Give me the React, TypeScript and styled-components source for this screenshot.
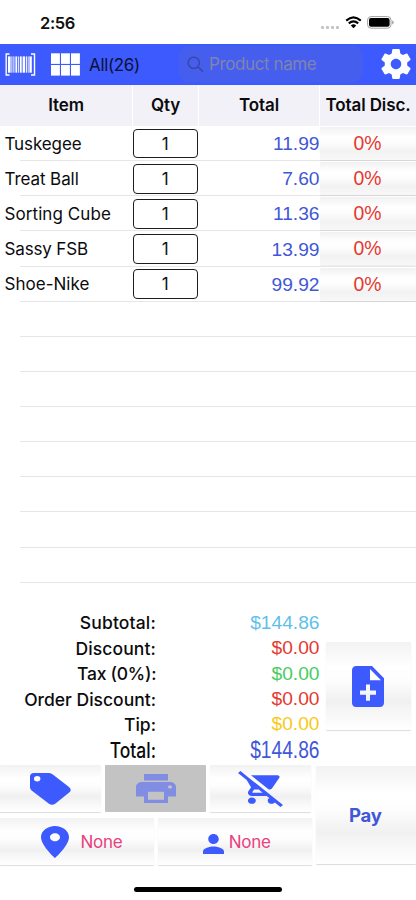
import React from "react";
import styled, { createGlobalStyle } from "styled-components";

const BLUE = "#3d5afe";
const INK_BLUE = "#4157d8";
const RED = "#e5392f";

const GlobalStyle = createGlobalStyle`
  *, *::before, *::after { box-sizing: border-box; }
  body { margin: 0; background: #fff; }
  button, input { font: inherit; border: 0; padding: 0; margin: 0; }
`;

const Screen = styled.main`
  width: 416px;
  height: 900px;
  display: flex;
  flex-direction: column;
  overflow: hidden;
  background: #fff;
  color: #0b0b0d;
  font-family: Inter, "Liberation Sans", sans-serif;
  font-size: 17px;
`;

const StatusBar = styled.header`
  flex: none;
  height: 44px;
  padding: 1px 22px 0 40px;
  display: flex;
  align-items: center;
  justify-content: space-between;
`;

const Clock = styled.time`
  font-size: 16.5px;
  font-weight: 600;
  letter-spacing: -0.4px;
  color: #111;
`;

const StatusIcons = styled.div`
  display: flex;
  align-items: center;
  gap: 5.5px;
`;

const Signal = styled.span`
  display: flex;
  gap: 2px;
  padding-top: 9px;
`;

const SignalDot = styled.i`
  width: 3px;
  height: 3px;
  border-radius: 1px;
  background: #c4c4c4;
`;

const NavBar = styled.nav`
  flex: none;
  height: 40.5px;
  padding: 0 5px;
  display: flex;
  align-items: center;
  background: ${BLUE};
`;

const Category = styled.span`
  width: 99px;
  padding: 1px 0 0 9px;
  font-size: 17px;
  letter-spacing: -0.35px;
  white-space: nowrap;
  color: #0b1136;
`;

const SearchField = styled.label`
  width: 184px;
  height: 36px;
  margin-right: 18px;
  padding-left: 8px;
  display: flex;
  align-items: center;
  gap: 5px;
  border-radius: 10px;
  background: #465eee;
`;

const SearchInput = styled.input`
  width: 140px;
  background: transparent;
  outline: none;
  letter-spacing: -0.4px;
  &::placeholder { color: #7f84ae; opacity: 1; }
`;

const HeaderRow = styled.div`
  flex: none;
  height: 41px;
  display: grid;
  grid-template-columns: 132px 66px 121px 97px;
  background: #f2f1f8;
`;

const HeaderCell = styled.div`
  display: flex;
  align-items: center;
  justify-content: center;
  border-left: 1px solid #fff;
  font-size: 17px;
  font-weight: 600;
  letter-spacing: -0.1px;
  white-space: nowrap;
  &:first-child { border-left: 0; }
`;

const Rows = styled.div`
  flex: none;
  height: 484.5px;
  padding-top: 0.6px;
`;

const Row = styled.div`
  height: 35.13px;
  display: grid;
  grid-template-columns: 132px 66px 121.5px 1fr;
  align-items: center;
  background: linear-gradient(#e6e6e8, #e6e6e8) 20px 100% / 100% 1px no-repeat;
`;

const ItemName = styled.span<{ $spacing: number }>`
  padding-left: 4.5px;
  letter-spacing: ${(p) => p.$spacing}px;
  white-space: nowrap;
`;

const Quantity = styled.input`
  width: 65px;
  height: 29.5px;
  margin-left: 0.8px;
  border: 1.4px solid #1d1d1f;
  border-radius: 4px;
  background: #fff;
  text-align: center;
  color: #111;
`;

const Amount = styled.span`
  padding-top: 1px;
  text-align: right;
  font-family: "Liberation Sans", Arial, sans-serif;
  font-size: 19.2px;
  color: ${INK_BLUE};
`;

const SoftButton = styled.button`
  display: flex;
  align-items: center;
  justify-content: center;
  border-radius: 1px;
  background: linear-gradient(#f2f2f2 0%, #fff 28%, #fdfdfd 45%, #f0f0f0 68%, #f5f5f5 76%, #fff 100%);
  box-shadow: 0 1px 1px rgba(0, 0, 0, 0.14);
`;

const RowDiscount = styled(SoftButton)`
  width: 96px;
  height: 33px;
  align-self: start;
  margin-top: 1px;
  background: linear-gradient(#f1f1f1 0%, #fff 30%, #fdfdfd 48%, #f2f2f2 74%, #f8f8f8 100%);
  box-shadow: 0 1px 1px rgba(0, 0, 0, 0.07);
  font-family: "Liberation Sans", Arial, sans-serif;
  font-size: 19.4px;
  color: ${RED};
`;

const Summary = styled.section`
  flex: none;
  height: 155px;
  display: grid;
  grid-template-columns: 319.5px 85px;
  column-gap: 6px;
`;

const SummaryLines = styled.dl`
  margin: 0;
`;

const SummaryLine = styled.div`
  height: 25.45px;
  display: grid;
  grid-template-columns: 156px 1fr;
  align-items: center;
  white-space: nowrap;
`;

const Label = styled.dt<{ $spacing: number; $tall?: boolean }>`
  text-align: right;
  font-size: 17.5px;
  font-weight: 450;
  margin-right: ${(p) => p.$spacing}px;
  letter-spacing: ${(p) => p.$spacing}px;
  transform-origin: right center;
  transform: ${(p) => (p.$tall ? "translateY(1px) scaleY(1.22)" : "none")};
`;

const Value = styled.dd<{ $color: string; $tall?: boolean }>`
  margin: 0;
  text-align: right;
  font-family: "Liberation Sans", Arial, sans-serif;
  font-size: 19.2px;
  color: ${(p) => p.$color};
  transform: ${(p) => (p.$tall ? "translateY(1px) scaleY(1.22)" : "none")};
`;

const NoteButton = styled(SoftButton)`
  height: 88px;
  margin-top: 32px;
`;

const Actions = styled.footer`
  flex: none;
  height: 100px;
  display: grid;
  grid-template-columns: 311.5px 100.5px;
  column-gap: 4px;
`;

const ActionGroup = styled.div`
  display: flex;
  flex-direction: column;
  gap: 6px;
`;

const ActionRow = styled.div<{ $columns: number }>`
  height: 47px;
  display: grid;
  grid-template-columns: repeat(${(p) => p.$columns}, 1fr);
  column-gap: 4px;
`;

const DisabledButton = styled(SoftButton)`
  background: #c3c3c4;
  box-shadow: none;
`;

const PickButton = styled(SoftButton)<{ $gap: number; $shift: number }>`
  gap: ${(p) => p.$gap}px;
  padding-left: ${(p) => p.$shift}px;
  letter-spacing: -0.3px;
  color: #e8407f;
`;

const PersonSlot = styled.span`
  padding-top: 4px;
`;

const PayButton = styled(SoftButton)`
  height: 98px;
  margin-top: 1px;
  padding-right: 1px;
  font-size: 18.5px;
  font-weight: 650;
  letter-spacing: -0.2px;
  color: ${INK_BLUE};
`;

const HomeArea = styled.div`
  flex: none;
  height: 35px;
  display: flex;
  justify-content: center;
  padding-top: 22px;
`;

const HomeIndicator = styled.div`
  width: 148px;
  height: 5px;
  border-radius: 3px;
  background: #000;
`;

const Icon = styled.svg<{ $gap?: number }>`
  display: block;
  flex: none;
  margin-right: ${(p) => p.$gap ?? 0}px;
`;

interface GlyphProps {
  d: string;
  box: string;
  width: number;
  height: number;
  color?: string;
}

const Glyph = ({ d, box, width, height, color = BLUE }: GlyphProps) => (
  <Icon width={width} height={height} viewBox={box} preserveAspectRatio="none" fill={color} aria-hidden>
    <path d={d} />
  </Icon>
);

const PATHS = {
  gear: "M19.43 12.98c.04-.32.07-.64.07-.98s-.03-.66-.07-.98l2.11-1.65c.19-.15.24-.42.12-.64l-2-3.46c-.12-.22-.39-.3-.61-.22l-2.49 1c-.52-.4-1.08-.73-1.69-.98l-.38-2.65C14.46 2.18 14.25 2 14 2h-4c-.25 0-.46.18-.49.42l-.38 2.65c-.61.25-1.17.59-1.69.98l-2.49-1c-.23-.09-.49 0-.61.22l-2 3.46c-.13.22-.07.49.12.64l2.11 1.65c-.04.32-.07.65-.07.98s.03.66.07.98l-2.11 1.65c-.19.15-.24.42-.12.64l2 3.46c.12.22.39.3.61.22l2.49-1c.52.4 1.08.73 1.69.98l.38 2.65c.03.24.24.42.49.42h4c.25 0 .46-.18.49-.42l.38-2.65c.61-.25 1.17-.59 1.69-.98l2.49 1c.23.09.49 0 .61-.22l2-3.46c.12-.22.07-.49-.12-.64l-2.11-1.65zM12 15.5c-1.93 0-3.5-1.57-3.5-3.5s1.57-3.5 3.5-3.5 3.5 1.57 3.5 3.5-1.57 3.5-3.5 3.5z",
  note: "M14 2H6c-1.1 0-1.99.9-1.99 2L4 20c0 1.1.89 2 1.99 2H18c1.1 0 2-.9 2-2V8l-6-6zm2 14h-3v3h-2v-3H8v-2h3v-3h2v3h3v2zm-3-7V3.5L18.5 9H13z",
  print: "M19 8H5c-1.66 0-3 1.34-3 3v6h4v4h12v-4h4v-6c0-1.66-1.34-3-3-3zm-3 11H8v-5h8v5zm3-7c-.55 0-1-.45-1-1s.45-1 1-1 1 .45 1 1-.45 1-1 1zm-1-9H6v4h12V3z",
  cart: "M22.73 22.73L2.77 2.77 2 2l-.73-.73L0 2.54l4.39 4.39 2.21 4.66-1.35 2.45c-.16.28-.25.61-.25.96 0 1.1.9 2 2 2h7.46l1.38 1.38c-.5.36-.83.95-.83 1.62 0 1.1.89 2 1.99 2 .67 0 1.26-.33 1.62-.84L21.46 24l1.27-1.27zM7.42 15c-.14 0-.25-.11-.25-.25l.03-.12.9-1.63h2.36l2 2H7.42zm8.13-2c.75 0 1.41-.41 1.75-1.03l3.58-6.49c.08-.14.12-.31.12-.48 0-.55-.45-1-1-1H6.54l9.01 9zM7 18c-1.1 0-1.99.9-1.99 2S5.9 22 7 22s2-.9 2-2-.9-2-2-2z",
  place: "M12 2C8.13 2 5 5.13 5 9c0 5.25 7 13 7 13s7-7.75 7-13c0-3.87-3.13-7-7-7zm0 9.5c-1.38 0-2.5-1.12-2.5-2.5s1.12-2.5 2.5-2.5 2.5 1.12 2.5 2.5-1.12 2.5-2.5 2.5z",
  person: "M12 12c2.21 0 4-1.79 4-4s-1.79-4-4-4-4 1.79-4 4 1.79 4 4 4zm0 2c-2.67 0-8 1.34-8 4v2h16v-2c0-2.66-5.33-4-8-4z",
  tag: "M4 0H18.5Q20.5 0 22.5 1.3L39 14Q42 16.7 39.8 19L25.5 30.5Q22 33 19 30.8L1.6 17.5Q0 16.2 0 14.5V3.5Q0 0 4 0ZM7.2 3.1A3.2 2.7 0 1 0 7.2 8.5A3.2 2.7 0 1 0 7.2 3.1Z",
};

const BARS: [number, number][] = [
  [3, 2.6], [6.4, 1], [8.4, 1], [10.4, 1.8], [13.2, 0.8], [14.8, 1.9],
  [17.6, 2.6], [21, 0.9], [22.7, 0.9], [24.4, 2.4],
];

const BarcodeIcon = () => (
  <Icon width={31} height={23} viewBox="0 0 31 23" $gap={15} aria-label="Scan">
    <path d="M4.5 1H1.2V22H4.5M26 1H29.5V22H26" fill="none" stroke="#fff" strokeWidth="1.4" />
    {BARS.map(([x, w]) => (
      <rect key={x} x={x} y="3.4" width={w} height="16.3" fill="#fff" />
    ))}
  </Icon>
);

const GridIcon = () => (
  <Icon width={29} height={23} viewBox="0 0 29 23" fill="#fff" aria-label="Categories">
    {[0, 10, 20].map((x) =>
      [0.3, 12].map((y) => <rect key={`${x}-${y}`} x={x} y={y} width="8.9" height="10.6" />)
    )}
  </Icon>
);

const WifiIcon = () => (
  <Icon width={17} height={13} viewBox="0 0 17 13" fill="none" stroke="#000" strokeWidth="2.1" aria-label="Wi-Fi">
    <path d="M1.2 4.6Q8.5 -2 15.8 4.6M3.8 7.4Q8.5 3.2 13.2 7.4" />
    <path d="M5.8 9.4Q8.5 7.1 11.2 9.4L8.5 12.2Z" fill="#000" stroke="none" />
  </Icon>
);

const BatteryIcon = () => (
  <Icon width={27} height={13} viewBox="0 0 27 13" aria-label="Battery">
    <rect x="0.6" y="0.6" width="23.4" height="11.6" rx="3.4" fill="none" stroke="#a2a2a2" strokeWidth="1" />
    <rect x="2" y="2" width="20.6" height="8.8" rx="2" fill="#000" />
    <path d="M25.1 4.2Q26.7 5 26.7 6.4T25.1 8.6Z" fill="#a2a2a2" />
  </Icon>
);

const SearchIcon = () => (
  <Icon width={17} height={17} viewBox="0 0 17 17" fill="none" stroke="#3a47a4" strokeWidth="1.5" strokeLinecap="round" aria-hidden>
    <circle cx="6.8" cy="6.8" r="5.6" />
    <path d="M11 11L15.6 15.4" />
  </Icon>
);

const ITEMS = [
  { name: "Tuskegee", total: "11.99", spacing: -0.1 },
  { name: "Treat Ball", total: "7.60", spacing: -0.08 },
  { name: "Sorting Cube", total: "11.36", spacing: 0.08 },
  { name: "Sassy FSB", total: "13.99", spacing: -0.15 },
  { name: "Shoe-Nike", total: "99.92", spacing: 0.02 },
];

const TOTALS = [
  { label: "Subtotal:", value: "$144.86", color: "#5fbfeb", spacing: 0.15 },
  { label: "Discount:", value: "$0.00", color: RED, spacing: 0.1 },
  { label: "Tax (0%):", value: "$0.00", color: "#48cc60", spacing: -0.25 },
  { label: "Order Discount:", value: "$0.00", color: RED, spacing: 0 },
  { label: "Tip:", value: "$0.00", color: "#f8c917", spacing: 0 },
  { label: "Total:", value: "$144.86", color: INK_BLUE, spacing: 0, tall: true },
];

export default function App() {
  return (
    <>
      <GlobalStyle />
      <Screen>
        <StatusBar>
          <Clock>2:56</Clock>
          <StatusIcons>
            <Signal>{[0, 1, 2, 3].map((n) => <SignalDot key={n} />)}</Signal>
            <WifiIcon />
            <BatteryIcon />
          </StatusIcons>
        </StatusBar>
        <NavBar>
          <BarcodeIcon />
          <GridIcon />
          <Category>All(26)</Category>
          <SearchField>
            <SearchIcon />
            <SearchInput placeholder="Product name" />
          </SearchField>
          <Glyph d={PATHS.gear} box="2 2 20 20" width={30} height={30} color="#fff" />
        </NavBar>
        <HeaderRow>
          <HeaderCell>Item</HeaderCell>
          <HeaderCell>Qty</HeaderCell>
          <HeaderCell>Total</HeaderCell>
          <HeaderCell>Total Disc.</HeaderCell>
        </HeaderRow>
        <Rows>
          {ITEMS.map((item) => (
            <Row key={item.name}>
              <ItemName $spacing={item.spacing}>{item.name}</ItemName>
              <Quantity defaultValue="1" />
              <Amount>{item.total}</Amount>
              <RowDiscount>0%</RowDiscount>
            </Row>
          ))}
          {Array.from({ length: 8 }, (_, i) => <Row key={i} />)}
        </Rows>
        <Summary>
          <SummaryLines>
            {TOTALS.map((t) => (
              <SummaryLine key={t.label}>
                <Label $spacing={t.spacing} $tall={t.tall}>{t.label}</Label>
                <Value $color={t.color} $tall={t.tall}>{t.value}</Value>
              </SummaryLine>
            ))}
          </SummaryLines>
          <NoteButton aria-label="Add note">
            <Glyph d={PATHS.note} box="4 2 16 20" width={32} height={41} />
          </NoteButton>
        </Summary>
        <Actions>
          <ActionGroup>
            <ActionRow $columns={3}>
              <SoftButton aria-label="Discounts">
                <Glyph d={PATHS.tag} box="0 0 41 32" width={41} height={32} />
              </SoftButton>
              <DisabledButton aria-label="Print" disabled>
                <Glyph d={PATHS.print} box="2 3 20 18" width={40} height={29} color="#808de2" />
              </DisabledButton>
              <SoftButton aria-label="Clear cart">
                <Glyph d={PATHS.cart} box="0 1.27 22.73 22.73" width={45} height={36} />
              </SoftButton>
            </ActionRow>
            <ActionRow $columns={2}>
              <PickButton $gap={11} $shift={10}>
                <Glyph d={PATHS.place} box="5 2 14 20" width={28} height={32} />
                None
              </PickButton>
              <PickButton $gap={5} $shift={4}>
                <PersonSlot>
                  <Glyph d={PATHS.person} box="4 4 16 16" width={21} height={20} />
                </PersonSlot>
                None
              </PickButton>
            </ActionRow>
          </ActionGroup>
          <PayButton>Pay</PayButton>
        </Actions>
        <HomeArea>
          <HomeIndicator />
        </HomeArea>
      </Screen>
    </>
  );
}
